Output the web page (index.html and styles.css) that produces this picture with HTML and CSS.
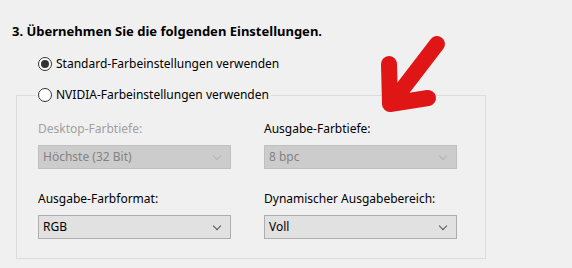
FILE: index.html
```html
<!DOCTYPE html>
<html lang="de">
<head>
    <meta charset="UTF-8">
    <title>Farbeinstellungen</title>
    <link rel="stylesheet" href="styles.css">
</head>
<body>
    <div class="page">
        <h3 class="step">3. Übernehmen Sie die folgenden Einstellungen.</h3>

        <label class="radio">
            <span class="dot checked"></span>
            Standard-Farbeinstellungen verwenden
        </label>

        <fieldset class="group">
            <legend>
                <label class="radio">
                    <span class="dot"></span>
                    NVIDIA-Farbeinstellungen verwenden
                </label>
            </legend>

            <div class="grid">
                <div class="field">
                    <div class="label disabled">Desktop-Farbtiefe:</div>
                    <div class="select disabled">Höchste (32 Bit)<span class="chev"></span></div>
                </div>
                <div class="field">
                    <div class="label">Ausgabe-Farbtiefe:</div>
                    <div class="select disabled">8 bpc<span class="chev"></span></div>
                </div>
                <div class="field">
                    <div class="label">Ausgabe-Farbformat:</div>
                    <div class="select">RGB<span class="chev"></span></div>
                </div>
                <div class="field">
                    <div class="label">Dynamischer Ausgabebereich:</div>
                    <div class="select">Voll<span class="chev"></span></div>
                </div>
            </div>
        </fieldset>

        <!-- roter Pfeil -->
        <svg class="arrow" width="80" height="90" viewBox="0 0 80 90">
            <path d="M61 12 L18 68 M13 32 L14 72 L52 66" fill="none" stroke="#e01515" stroke-width="16" stroke-linecap="round" stroke-linejoin="round"/>
        </svg>
    </div>
</body>
</html>
```

FILE: styles.css
```css
body {
    margin: 0;
    background-color: #f0f0f0;
    font-family: "Noto Sans", "Open Sans", sans-serif;
    font-size: 12px;
    color: #000;
}
.page {
    position: relative;
    width: 572px;
    height: 268px;
    padding: 23px 0 0 0;
    box-sizing: border-box;
}
.step {
    margin: 0 0 0 12px;
    font-size: 13px;
    font-weight: bold;
    line-height: 16px;
}
.radio {
    display: flex;
    align-items: center;
    gap: 4px;
    line-height: 18px;
}
.page > .radio {
    margin: 16px 0 0 38px;
}
.dot {
    width: 14px;
    height: 14px;
    border: 1px solid #333;
    border-radius: 50%;
    background: #fff;
    box-sizing: border-box;
    display: flex;
    align-items: center;
    justify-content: center;
}
.dot.checked::after {
    content: "";
    width: 8px;
    height: 8px;
    border-radius: 50%;
    background: #333;
}
.group {
    margin: 13px 0 0 16px;
    width: 470px;
    box-sizing: border-box;
    border: 1px solid #dcdcdc;
    padding: 16px 0 19px 21px;
}
.group legend {
    margin-left: -2px;
    padding: 0 2px;
}
.grid {
    display: grid;
    grid-template-columns: 193px 193px;
    column-gap: 33px;
    row-gap: 21px;
}
.label {
    line-height: 18px;
    margin-bottom: 7px;
}
.label.disabled {
    color: #a0a0a0;
}
.select {
    position: relative;
    height: 24px;
    box-sizing: border-box;
    border: 1px solid #adadad;
    background: #e1e1e1;
    padding: 0 0 0 4px;
    line-height: 22px;
}
.select.disabled {
    background: #cccccc;
    border-color: #bfbfbf;
    color: #838383;
}
.chev {
    position: absolute;
    right: 10px;
    top: 7px;
    width: 5px;
    height: 5px;
    border-right: 1px solid #555;
    border-bottom: 1px solid #555;
    transform: rotate(45deg);
}
.select.disabled .chev {
    border-color: #b4b4b4;
}
.arrow {
    position: absolute;
    left: 376px;
    top: 32px;
}
```
